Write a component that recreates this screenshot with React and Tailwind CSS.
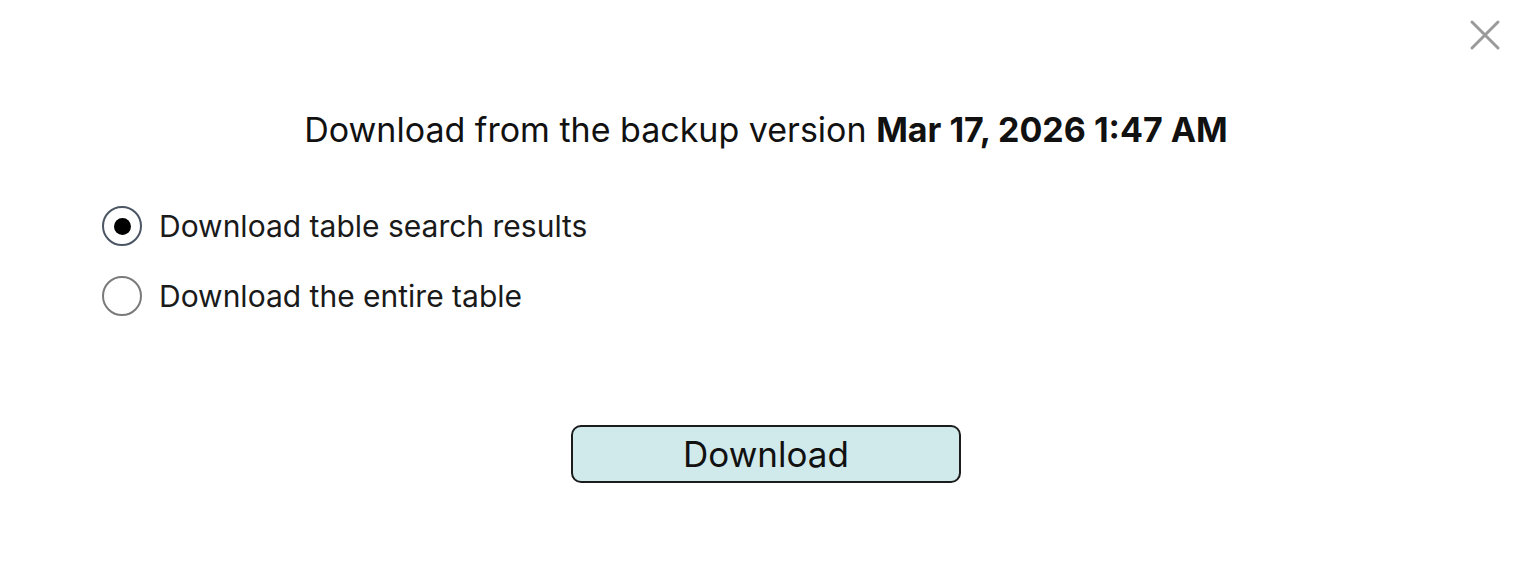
import { useState } from 'react';

const OPTIONS = [
  { id: 'search', label: 'Download table search results' },
  { id: 'entire', label: 'Download the entire table' },
];

function Radio({ checked, label, onSelect }) {
  return (
    <button type="button" onClick={onSelect} className="flex items-center gap-[17px] h-[42px] text-left">
      <span
        className={`flex items-center justify-center w-[40px] h-[40px] rounded-full border-2 bg-white ${
          checked ? 'border-[#4b5563]' : 'border-[#7a7a7a]'
        }`}
      >
        {checked && <span className="w-[17px] h-[17px] rounded-full bg-black" />}
      </span>
      <span className="text-[30px] text-[#1a1a1a] leading-none">{label}</span>
    </button>
  );
}

export default function App() {
  const [choice, setChoice] = useState('search');

  return (
    <div className="relative w-[1532px] h-[586px] bg-white font-['Inter',sans-serif]">
      {/* close */}
      <button type="button" className="absolute right-[31px] top-[19px] w-[32px] h-[32px] text-[#9a9a9a]">
        <svg viewBox="0 0 32 32" width={32} height={32} fill="none" stroke="currentColor" strokeWidth={3} strokeLinecap="round">
          <path d="M3 3 L29 29 M29 3 L3 29" />
        </svg>
      </button>

      <div className="pt-[110px] flex flex-col">
        <h2 className="text-center text-[34px] leading-[40px] text-[#111]">
          Download from the backup version <span className="font-bold">Mar 17, 2026 1:47 AM</span>
        </h2>

        <div className="mt-[55px] pl-[102px] flex flex-col gap-[28px]">
          {OPTIONS.map(o => (
            <Radio key={o.id} label={o.label} checked={choice === o.id} onSelect={() => setChoice(o.id)} />
          ))}
        </div>

        <div className="mt-[108px] flex justify-center">
          <button
            type="button"
            className="w-[390px] h-[58px] rounded-[10px] border-2 border-[#1c1c1c] bg-[#d0e9ea] text-[35px] text-[#111] leading-none"
          >
            Download
          </button>
        </div>
      </div>
    </div>
  );
}
